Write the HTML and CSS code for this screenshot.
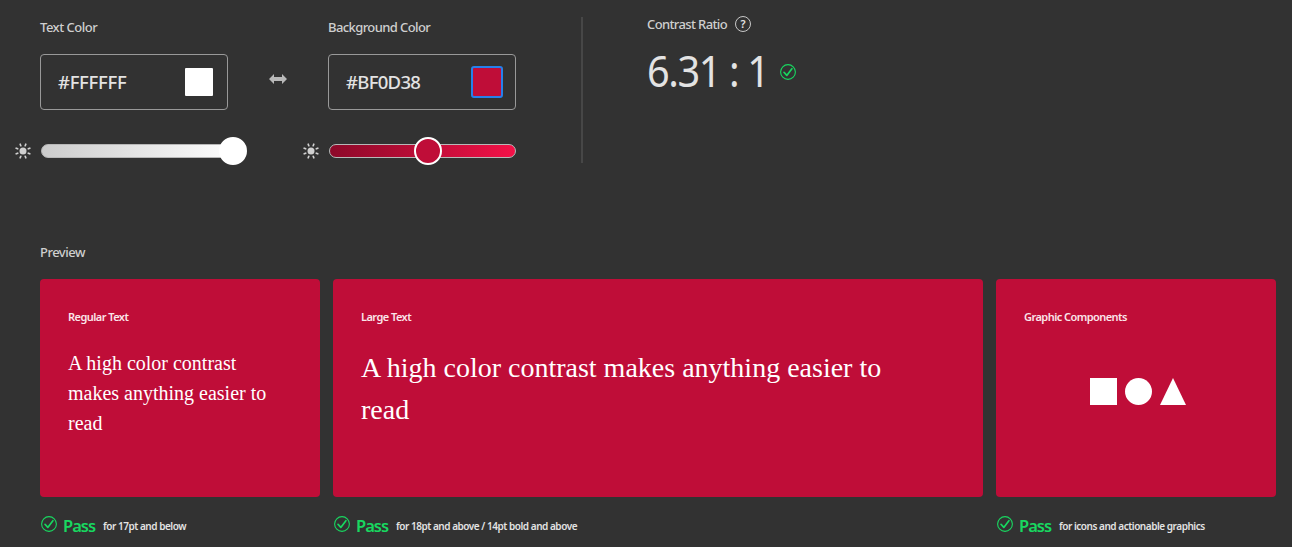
FILE: index.html
```html
<!DOCTYPE html>
<html lang="en">
<head>
<meta charset="utf-8">
<title>Contrast Checker</title>
<link rel="stylesheet" href="styles.css">
</head>
<body>
<svg class="defs" width="0" height="0">
  <symbol id="sun" viewBox="0 0 16 16">
    <circle cx="8" cy="8" r="3.500" fill="currentColor"/>
    <path d="M10.200 2.700 10.800 1.200M13.300 5.800 14.800 5.200M13.300 10.200 14.800 10.800M10.200 13.300 10.800 14.800M5.800 13.300 5.200 14.800M2.700 10.200 1.200 10.800M2.700 5.800 1.200 5.200M5.800 2.700 5.200 1.200" stroke="currentColor" stroke-width="1.700" fill="none" stroke-linecap="round"/>
  </symbol>
  <symbol id="check" viewBox="0 0 16 16">
    <circle cx="8" cy="8" r="7.400" fill="none" stroke="currentColor" stroke-width="1.100"/>
    <path d="M4 8.300 6.800 11.400 11.900 4.700" fill="none" stroke="currentColor" stroke-width="1.700" stroke-linecap="round" stroke-linejoin="round"/>
  </symbol>
</svg>
<header class="controls">
  <section class="picker">
    <h2 class="label">Text Color</h2>
    <div class="field"><span class="hex hex-text">#FFFFFF</span><span class="swatch"></span></div>
    <div class="brightness">
      <svg class="sun"><use href="#sun"/></svg>
      <div class="track light"><span class="thumb end"></span></div>
    </div>
  </section>
  <svg class="swap" viewBox="0 0 18 10"><path d="M0 5 5 0V3H13V0L18 5 13 10V7H5V10Z" fill="#b9b9b9"/></svg>
  <section class="picker">
    <h2 class="label l-bg">Background Color</h2>
    <div class="field"><span class="hex hex-bg">#BF0D38</span><span class="swatch selected"></span></div>
    <div class="brightness">
      <svg class="sun"><use href="#sun"/></svg>
      <div class="track red"><span class="thumb mid"></span></div>
    </div>
  </section>
  <div class="divider"></div>
  <section class="ratio">
    <div class="ratio-head">
      <h2 class="label l-ratio">Contrast Ratio</h2>
      <span class="help">?</span>
    </div>
    <div class="ratio-value"><span class="number">6.31 : 1</span><svg class="check"><use href="#check"/></svg></div>
  </section>
</header>
<main class="preview">
  <h2 class="label">Preview</h2>
  <div class="cards">
    <article>
      <div class="card">
        <h3 class="card-title">Regular Text</h3>
        <p class="regular">A high color contrast makes anything easier to read</p>
      </div>
      <div class="result"><svg class="check"><use href="#check"/></svg><strong class="pass">Pass</strong><span class="note">for 17pt and below</span></div>
    </article>
    <article>
      <div class="card">
        <h3 class="card-title">Large Text</h3>
        <p class="large">A high color contrast makes anything easier to read</p>
      </div>
      <div class="result"><svg class="check"><use href="#check"/></svg><strong class="pass">Pass</strong><span class="note">for 18pt and above / 14pt bold and above</span></div>
    </article>
    <article>
      <div class="card">
        <h3 class="card-title">Graphic Components</h3>
        <svg class="shapes" viewBox="0 0 96 27" fill="#fff"><path d="M0 0H27V27H0Z"/><circle cx="48.500" cy="13.500" r="13.500"/><path d="M83 0 96 27H70Z"/></svg>
      </div>
      <div class="result"><svg class="check"><use href="#check"/></svg><strong class="pass">Pass</strong><span class="note">for icons and actionable graphics</span></div>
    </article>
  </div>
</main>
</body>
</html>
```
FILE: styles.css
```css
* { box-sizing: border-box; margin: 0; }
body {
  width: 1292px;
  height: 547px;
  overflow: hidden;
  background: #323232;
  color: #e3e3e3;
  font-family: "Noto Sans", "Open Sans", sans-serif;
}
svg { display: block; flex: none; }
.defs { position: absolute; }
.controls { display: flex; height: 242px; padding: 17px 0 0 40px; }
.label { font-size: 13px; line-height: 20px; font-weight: 500; letter-spacing: -0.5px; color: #cfcfcf; white-space: nowrap; }
.l-bg { letter-spacing: -0.6px; }
.picker { width: 188px; flex: none; }
.field {
  display: flex;
  align-items: center;
  justify-content: space-between;
  height: 56px;
  margin-top: 17px;
  padding: 0 12px 0 17px;
  border: 1px solid #999;
  border-radius: 4px;
}
.hex { padding-bottom: 2px; font-size: 18.500px; font-weight: 500; white-space: nowrap; }
.hex-text { letter-spacing: -0.300px; }
.hex-bg { letter-spacing: -0.700px; }
.swatch { width: 32px; height: 32px; border: 2px solid transparent; border-radius: 3px; background: #fff padding-box; }
.swatch.selected { background: #bf0d38; border-color: #2680eb; }
.brightness { display: flex; align-items: center; height: 28px; margin: 27px 0 0 -25px; }
.sun { width: 16px; height: 16px; margin-right: 10px; color: #d0d0d0; }
.track { position: relative; width: 187px; height: 14px; flex: none; border: 1px solid #b8b8b8; border-radius: 7px; }
.track.light { background: linear-gradient(90deg, #ccc, #fff); width: 199px; }
.track.red { background: linear-gradient(90deg, #8c0929, #bf0d38 52%, #f51148); background-origin: border-box; }
.thumb { position: absolute; top: -8px; width: 28px; height: 28px; border-radius: 50%; border: 2px solid #fff; background: #bf0d38; }
.thumb.end { left: 177px; background: #fff; }
.thumb.mid { left: 84px; }
.swap { width: 18px; height: 10px; margin: 57px 41px 0; }
.divider { width: 2px; height: 146px; margin-left: 65px; background: #474747; flex: none; }
.ratio { margin-left: 64px; }
.ratio-head { display: flex; align-items: center; gap: 8px; height: 16px; margin-top: -1px; }
.l-ratio { width: 80px; letter-spacing: -0.620px; }
.help { width: 16px; height: 16px; border: 1px solid #c8c8c8; border-radius: 50%; text-align: center; font-size: 11px; line-height: 14px; font-weight: 600; }
.ratio-value { display: flex; align-items: center; margin-top: 11px; height: 58px; }
.number { width: 133px; padding-bottom: 5px; font-size: 44px; line-height: 58px; letter-spacing: -1.500px; white-space: nowrap; transform: scaleX(0.9); transform-origin: left; }
.check { width: 16px; height: 16px; color: #18d860; }
.preview { padding-left: 40px; }
.cards { display: grid; grid-template-columns: 280px 650px 280px; gap: 13px; margin-top: 17px; }
.card { height: 218px; padding: 28px; border-radius: 4px; background: #bf0d38; color: #fff; }
.card-title { font-size: 11px; line-height: 20px; font-weight: 600; letter-spacing: -0.550px; color: #fbe5ea; white-space: nowrap; }
.regular, .large { font-family: "Liberation Serif", serif; }
.regular { margin-top: 21px; font-size: 20px; line-height: 30px; }
.large { max-width: 540px; margin-top: 20px; font-size: 28px; line-height: 42px; }
.shapes { width: 96px; height: 27px; margin: 51px 0 0 66px; }
.result { display: flex; height: 50px; padding: 19px 0 0 1px; }
.pass { width: 40px; margin-left: 6px; font-size: 16.500px; line-height: 19px; font-weight: 600; letter-spacing: -1px; color: #18d860; }
.note { font-size: 10px; line-height: 20px; font-weight: 600; letter-spacing: -0.470px; white-space: nowrap; }
```
